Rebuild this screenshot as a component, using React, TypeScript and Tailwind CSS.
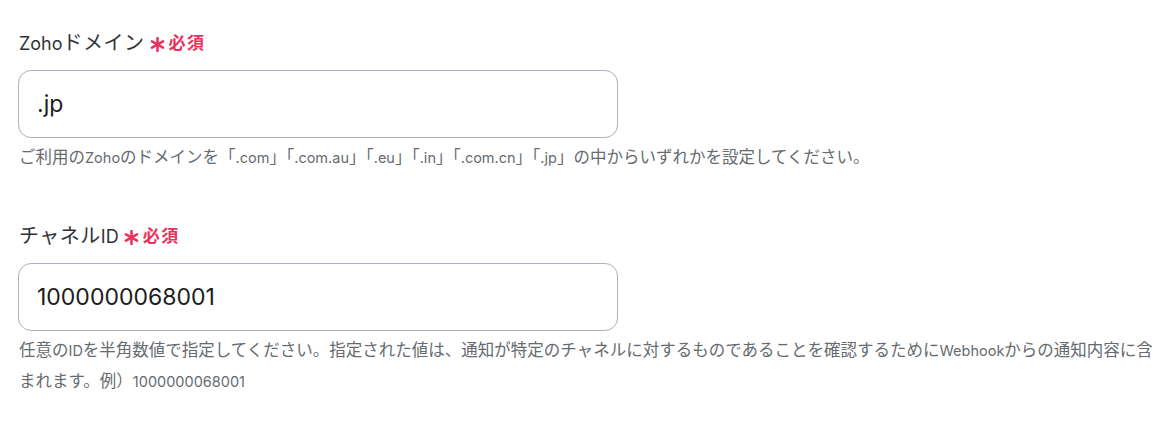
import React from "react";

function runs(text: string) {
  const parts: { latin: boolean; s: string }[] = [];
  for (const ch of text) {
    const latin = ch.charCodeAt(0) < 0x2000;
    const last = parts[parts.length - 1];
    if (last && last.latin === latin) last.s += ch;
    else parts.push({ latin, s: ch });
  }
  return parts;
}

function Mixed({ text, latinClass, cjkClass }: { text: string; latinClass: string; cjkClass: string }) {
  return (
    <>
      {runs(text).map((p, i) => (
        <span key={i} className={p.latin ? latinClass : cjkClass}>
          {p.s}
        </span>
      ))}
    </>
  );
}

export default function App() {
  const font = { fontFamily: 'Inter, "Noto Sans CJK JP", sans-serif' };
  return (
    <div className="w-[1168px] h-[430px] bg-white pl-[18px] pt-[31px]" style={font}>
      <div className="w-[1146px]">
        <Field
          label="Zohoドメイン"
          value=".jp"
          help="ご利用のZohoのドメインを「.com」「.com.au」「.eu」「.in」「.com.cn」「.jp」の中からいずれかを設定してください。"
        />
        <div className="h-[51px]" />
        <Field
          label="チャネルID"
          value="1000000068001"
          help="任意のIDを半角数値で指定してください。指定された値は、通知が特定のチャネルに対するものであることを確認するためにWebhookからの通知内容に含まれます。例）1000000068001"
        />
      </div>
    </div>
  );
}

function Asterisk() {
  return (
    <svg width="15" height="15" viewBox="0 0 14 14" className="shrink-0">
      <g stroke="#e8335f" strokeWidth="2.4" strokeLinecap="round">
        <line x1="7" y1="1" x2="7" y2="13" />
        <line x1="1.8" y1="4" x2="12.2" y2="10" />
        <line x1="1.8" y1="10" x2="12.2" y2="4" />
      </g>
    </svg>
  );
}

function Field({ label, value, help }: { label: string; value: string; help: string }) {
  return (
    <div className="flex flex-col">
      <div className="flex items-center h-[24px]">
        <span className="text-[#2f3337] pl-[1px] leading-[24px]">
          <Mixed text={label} latinClass="text-[18px]" cjkClass="text-[20px] tracking-[0.5px]" />
        </span>
        <span className="ml-[5px] mt-[2px] flex items-center">
          <Asterisk />
        </span>
        <span className="ml-[4px] text-[#e8335f] text-[17px] font-bold tracking-[1.5px] leading-[24px]">必須</span>
      </div>
      <div className="mt-[15px] w-[600px] h-[68px] rounded-[13px] border border-[#aab2bb] flex items-center px-[18px] text-[23px] text-[#1c1c1c]">
        {value}
      </div>
      <p className="mt-[4px] leading-[30px] text-[#666b70] pl-[1px]">
        <Mixed text={help} latinClass="text-[14.5px]" cjkClass="text-[16.5px]" />
      </p>
    </div>
  );
}
